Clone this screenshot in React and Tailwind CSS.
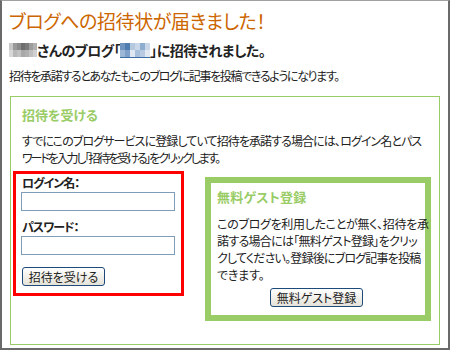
import React from "react";

const nameBlocks = [
  ["#c8c8c8", "#9a9a9a", "#8a8a8a", "#6e6e6e", "#7a7a7a", "#9c9c9c", "#b0b0b0"],
  ["#d8d8d8", "#b8b8b8", "#c2c2c2", "#a8a8a8", "#b0b0b0", "#c0c0c0", "#d0d0d0"],
];
const blogBlocks = [
  ["#6f95bf", "#4f7db0", "#b4c8de", "#c9d7e8", "#8eaed0", "#c8d6e8"],
  ["#9db8d6", "#7fa0c8", "#dfe8f2", "#a9c0dc", "#b8cbe2", "#e0e8f2"],
];

function Blur({ rows, w }) {
  return (
    <span className="inline-flex flex-col align-middle">
      {rows.map((r, i) => (
        <span key={i} className="flex">
          {r.map((c, j) => (
            <span key={j} className="block h-[7px]" style={{ width: w, background: c }} />
          ))}
        </span>
      ))}
    </span>
  );
}

export default function App() {
  const font = "font-['Noto_Sans_CJK_JP','Noto_Sans',sans-serif] [font-feature-settings:'palt']";
  return (
    <div className={`w-[450px] h-[350px] bg-white border-x-2 border-b-2 border-t border-[#6a6a6a] border-t-[#a0a0a0] px-[8px] text-[#222] ${font}`}>
      <h1 className="-ml-px mt-[6px] text-[19px] leading-[28px] text-[#cc6600] tracking-[-0.4px]">
        ブログへの招待状が届きました！
      </h1>
      <div className="-ml-px mt-[5px] flex items-center text-[14px] leading-[20px] font-bold tracking-[-0.5px]">
        <Blur rows={nameBlocks} w={4} />
        <span>さんのブログ「</span>
        <span className="inline-flex flex-col border-b border-[#3a6ea5]">
          <Blur rows={blogBlocks} w={5} />
        </span>
        <span>」に招待されました。</span>
      </div>
      <p className="-ml-px mt-[8px] text-[12px] leading-[16px] whitespace-nowrap tracking-[-1.35px]">
        招待を承諾するとあなたもこのブログに記事を投稿できるようになります。
      </p>
      <div className="mt-[12px] h-[249px] border border-[#99cc66]">
        <h2 className="pl-[11px] pt-[9px] text-[13px] leading-[18px] font-bold text-[#99cc66]">招待を受ける</h2>
        <p className="pl-[11px] mt-[8px] text-[12px] leading-[17px] whitespace-nowrap">
          <span className="block tracking-[-0.9px]">すでにこのブログサービスに登録していて招待を承諾する場合には、ログイン名とパス</span>
          <span className="block tracking-[-2.1px]">ワードを入力し「招待を受ける」をクリックします。</span>
        </p>
        <div className="mt-[5px] ml-[2px] flex items-start gap-[21px]">
          <div className="w-[171px] border-[3px] border-[#ff0000] pl-[5px] pt-[1px] pb-[7px]">
            <div className="pl-px text-[12px] leading-[16px] font-bold tracking-[-1px]">ログイン名：</div>
            <input className="mt-px block h-[19px] w-[154px] border border-[#7f9db9] bg-white outline-none" />
            <div className="mt-[8px] pl-px text-[12px] leading-[16px] font-bold tracking-[-1px]">パスワード：</div>
            <input type="password" className="mt-px block h-[19px] w-[154px] border border-[#7f9db9] bg-white outline-none" />
            <button className="mt-[12px] ml-px flex h-[19px] w-[83px] items-center justify-center rounded-[3px] border border-[#1c4a7a] bg-gradient-to-b from-white to-[#e4e2d8] text-[12px] leading-none text-[#222]">
              招待を受ける
            </button>
          </div>
          <div className="mt-[6px] h-[144px] w-[226px] border-[6px] border-[#99cc66] pl-[6px] pt-[5px]">
            <h3 className="text-[13px] leading-[18px] font-bold text-[#99cc66] tracking-[0.3px]">無料ゲスト登録</h3>
            <p className="mt-[9px] text-[12px] leading-[17px] whitespace-nowrap">
              <span className="block tracking-[-0.3px]">このブログを利用したことが無く、招待を承</span>
              <span className="block tracking-[-0.7px]">諾する場合には「無料ゲスト登録」をクリッ</span>
              <span className="block tracking-[-0.8px]">クしてください。登録後にブログ記事を投稿</span>
              <span className="block tracking-[-0.2px]">できます。</span>
            </p>
            <div className="mt-[5px] flex">
              <button className="ml-[53px] flex h-[19px] w-[93px] items-center justify-center rounded-[3px] border border-[#1c4a7a] bg-gradient-to-b from-white to-[#e4e2d8] text-[12px] leading-none text-[#222]">
                無料ゲスト登録
              </button>
            </div>
          </div>
        </div>
      </div>
    </div>
  );
}
